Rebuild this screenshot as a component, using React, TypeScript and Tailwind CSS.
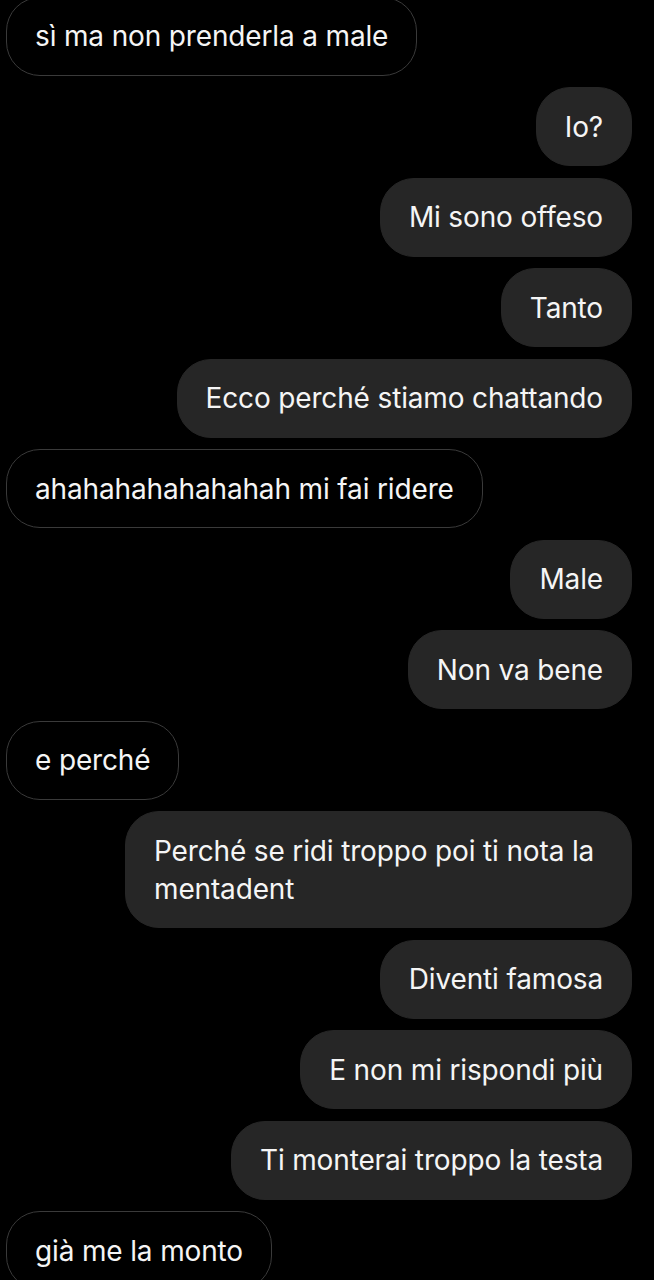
import React from "react";

type Msg = { text: string; me: boolean };

const messages: Msg[] = [
  { text: "sì ma non prenderla a male", me: false },
  { text: "Io?", me: true },
  { text: "Mi sono offeso", me: true },
  { text: "Tanto", me: true },
  { text: "Ecco perché stiamo chattando", me: true },
  { text: "ahahahahahahahah mi fai ridere", me: false },
  { text: "Male", me: true },
  { text: "Non va bene", me: true },
  { text: "e perché", me: false },
  { text: "Perché se ridi troppo poi ti nota la mentadent", me: true },
  { text: "Diventi famosa", me: true },
  { text: "E non mi rispondi più", me: true },
  { text: "Ti monterai troppo la testa", me: true },
  { text: "già me la monto", me: false },
];

export default function App() {
  return (
    <div
      className="w-[654px] h-[1280px] overflow-hidden bg-black"
      style={{ fontFamily: "Inter, 'Noto Sans', sans-serif" }}
    >
      <div className="flex flex-col gap-[11.5px] pl-[6px] pr-[22px] -mt-[3.5px]">
        {messages.map((m, i) =>
          m.me ? (
            <div key={i} className="flex justify-end">
              <div className="max-w-[507px] rounded-[34px] bg-[#262626] border border-[#262626] px-[28px] py-[19.5px] text-[28px] leading-[38px] tracking-[-0.15px] text-[#f5f5f5]">
                {m.text}
              </div>
            </div>
          ) : (
            <div key={i} className="flex justify-start">
              <div className="max-w-[507px] rounded-[34px] bg-black border border-[#3a3a3a] px-[28px] py-[19.5px] text-[28px] leading-[38px] tracking-[-0.15px] text-[#f5f5f5]">
                {m.text}
              </div>
            </div>
          )
        )}
      </div>
    </div>
  );
}
